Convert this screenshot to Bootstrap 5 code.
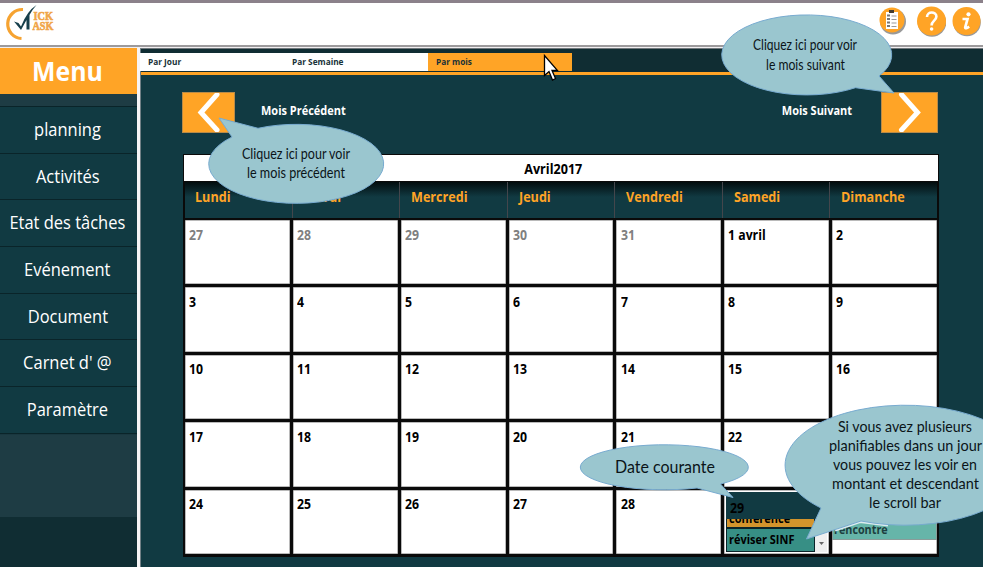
<!DOCTYPE html>
<html lang="fr">
<head>
<meta charset="utf-8">
<meta name="viewport" content="width=device-width, initial-scale=1">
<title>Click Task - Planning</title>
<link href="https://cdn.jsdelivr.net/npm/bootstrap@5.3.0/dist/css/bootstrap.min.css" rel="stylesheet">
<style>
  :root { --deep:#113a42; --night:#102d33; --slate:#1e3c44; --amber:#ffa426; }
  body { font-family:"Open Sans","Noto Sans",sans-serif; width:983px; height:567px; background:var(--deep); }
  .topbar { height:48px; border-top:3px solid #8b818a; border-bottom:1px solid #f1eff1; box-shadow:inset 0 -2px 0 #9c9a9c; padding-right:1px; }
  .brand-logo { margin:2px 0 0 5px; }
  .tools { padding-top:2px; gap:6px; }
  .layout { height:519px; }
  .side { width:137px; background:var(--night); }
  .menu-title { height:46px; background:var(--amber); color:#fff; font-weight:700; font-size:27px; line-height:46px; padding-right:2px; }
  .menu-title .fit { --k:.92; }
  .menu-body { background:var(--slate); padding-top:12px; height:423px; }
  .menu-item { height:46.7px; background:var(--deep); color:#fff; font-size:18px; border-top:1px solid #0a2429; box-shadow:0 1px 1px #0a2429; padding:0 2px 1px 0; }
  .fit { display:inline-block; white-space:nowrap; transform:scaleX(var(--k,.9)); }
  .menu-item .fit { --k:.915; }
  .fit-l { transform-origin:left center; }
  .fit-r { transform-origin:right center; }
  .rail { width:4px; background:#f6f4f5; border-right:1px solid #718086; }
  .tabs { height:27px; background:var(--night); border-top:1px solid #70777b; padding:4px 0 3px; border-bottom:3px solid var(--amber); }
  .tab-cell { width:144px; height:18px; background:#fff; color:#183238; font-size:9.2px; font-weight:700; line-height:18px; padding-left:8px; margin-left:-1px; margin-right:1px; }
  .tab-cell.on { background:var(--amber); }
  .month-nav { height:41px; margin:17px 45px 0 41px; color:#fff; font-weight:700; font-size:12.2px; }
  .month-nav .fit { position:relative; top:-1px; }
  .arrow-btn { background:var(--amber); height:41px; border:1px solid #b88a48; }
  .label-prev { margin-left:26px; }
  .label-next { margin-right:29px; }
  .cal { width:756px; margin:21px 0 0 42px; background:#0a0a0a; padding:1px 2px 3px 2px; font-weight:700; }
  .cal-title { height:26px; color:#000; font-size:14px; line-height:28px; background:#fff; margin:0 -1px; padding-right:16px; }
  .cal-head, .cal-grid { display:grid; grid-template-columns:repeat(7,1fr); }
  .cal-head { height:36px; margin-top:1px; gap:1px; background:#44464c; }
  .cal-head > div { background:linear-gradient(#020c0e 0,#113a42 15px); color:var(--amber); font-size:14px; padding:4px 0 0 11px; }
  .cal-head > div:first-child { padding-left:10px; }
  .cal-grid { margin-top:2px; gap:3px; height:334px; grid-template-rows:repeat(5,1fr); }
  .day { background:#fff; box-shadow:inset 0 0 0 .5px #777; color:#000; font-size:13.8px; line-height:20px; padding:4.500px 0 0 4.200px; min-width:0; min-height:0; overflow:hidden; }
  .day > .fit { --k:.89; }
  .day.off { color:#808080; }
  .day.now { padding:2px; }
  .now-head { background:var(--deep); height:27px; padding:6px 0 0 4px; width:101px; line-height:19px; }
  .now-list { width:89px; background:#0a2429; padding:0 1px 1px; font-size:12.2px; }
  .ev-cut { height:8px; background:#d3942c; overflow:hidden; line-height:8px; padding-left:2px; }
  .ev-cut .fit { position:relative; top:-4px; }
  .ev-main { height:22px; margin-top:2px; background:#378f85; line-height:22px; padding-left:2px; }
  .now-scroll { width:12px; background:#efefef; }
  .ev-soft { background:#66b5a9; color:#1d3f40; font-size:12px; line-height:17px; height:20px; border:1px solid #8a9c99; margin:26px 0 0 -4px; padding-left:1px; }
  .notes { left:0; top:0; pointer-events:none; }
  .notes text { font-family:Lato,"Open Sans",sans-serif; fill:#0b1418; }
  .bubble { fill:#9ac6cf; stroke:#78abd0; stroke-width:1; }
</style>
<script src="https://cdn.jsdelivr.net/npm/bootstrap@5.3.0/dist/js/bootstrap.bundle.min.js"></script>
</head>
<body class="position-relative overflow-hidden m-0">
<header class="topbar bg-white d-flex justify-content-between">
  <svg class="brand-logo" width="54" height="38" viewBox="4 5 54 38">
    <path d="M22 9.500A14.500 14.500 0 0 0 20.500 38.500" fill="none" stroke="#f6a331" stroke-width="3.200"/>
    <path d="M13 21.500l4.500 1.500 2.500 3.500Q26 11 35.500 5 31 10 28.500 15v14.500h-3V20l-5.500 10z" fill="#173f4b"/>
    <g font-family="Liberation Serif,serif" font-weight="700" font-size="12" fill="#f0a548" stroke="#f0a548" stroke-width=".6">
      <text x="32.500" y="20" textLength="19.500" lengthAdjust="spacingAndGlyphs">ICK</text>
      <text x="31.500" y="30" textLength="21" lengthAdjust="spacingAndGlyphs">ASK</text>
    </g>
  </svg>
  <div class="tools d-flex">
    <svg width="29" height="34" viewBox="879 5 29 34">
      <circle cx="893" cy="21.500" r="13" fill="#999"/><circle cx="892" cy="20" r="12.500" fill="#ffa426"/>
      <path d="M886 12h12v17h-12z" fill="#fff"/><path d="M889 10h5v3h-5z" fill="#443c30"/>
      <path d="M887 15.500h3m-3 3.500h3m-3 3.500h3m-3 3.500h3" stroke="#777" stroke-width="1.800"/><path d="M891.500 16h5m-5 3.500h5m-5 3.500h5m-5 3.500h5" stroke="#999"/>
    </svg>
    <svg width="32" height="34" viewBox="914 5 32 34">
      <circle cx="932" cy="22.500" r="14.300" fill="#999"/><circle cx="931.500" cy="21" r="14.500" fill="#ffa426"/>
      <path d="M927 17c0-6 9.400-5.700 9.400-.4 0 4-4.800 4.200-4.800 8.800" fill="none" stroke="#fff" stroke-width="2.600"/><circle cx="931.600" cy="29" r="1.800" fill="#fff"/>
    </svg>
    <svg width="30" height="34" viewBox="952 5 30 34">
      <circle cx="967" cy="22.500" r="13.800" fill="#999"/><circle cx="966.500" cy="21" r="14" fill="#ffa426"/>
      <circle cx="968.500" cy="14.300" r="2.100" fill="#fff"/><path d="M962.500 19h5l-2.300 8.500q0 1.800 4-.8" fill="none" stroke="#fff" stroke-width="2.700"/>
    </svg>
  </div>
</header>
<div class="layout d-flex">
  <nav class="side flex-shrink-0 text-center">
    <div class="menu-title"><span class="fit">Menu</span></div>
    <div class="menu-body">
      <div class="menu-item d-flex align-items-center justify-content-center"><span class="fit">planning</span></div>
      <div class="menu-item d-flex align-items-center justify-content-center"><span class="fit">Activités</span></div>
      <div class="menu-item d-flex align-items-center justify-content-center"><span class="fit">Etat des tâches</span></div>
      <div class="menu-item d-flex align-items-center justify-content-center"><span class="fit">Evénement</span></div>
      <div class="menu-item d-flex align-items-center justify-content-center"><span class="fit">Document</span></div>
      <div class="menu-item d-flex align-items-center justify-content-center"><span class="fit">Carnet d' @</span></div>
      <div class="menu-item d-flex align-items-center justify-content-center"><span class="fit">Paramètre</span></div>
    </div>
  </nav>
  <div class="rail flex-shrink-0"></div>
  <main class="flex-grow-1">
    <div class="tabs d-flex">
      <div class="tab-cell"><span class="fit fit-l">Par Jour</span></div>
      <div class="tab-cell"><span class="fit fit-l">Par Semaine</span></div>
      <div class="tab-cell on"><span class="fit fit-l">Par mois</span></div>
    </div>
    <div class="month-nav d-flex align-items-center">
      <div class="arrow-btn"><svg class="d-block" width="51" height="39" viewBox="183 93 51 39"><path d="M217 94.500L201 112.500 217 130" fill="none" stroke="#fff" stroke-width="5" stroke-linecap="round"/></svg></div>
      <span class="fit fit-l label-prev">Mois Précédent</span>
      <span class="fit fit-r label-next ms-auto">Mois Suivant</span>
      <div class="arrow-btn"><svg class="d-block" width="55" height="39" viewBox="882 93 55 39"><path d="M901.500 94.500L917.500 112.500 901.500 130" fill="none" stroke="#fff" stroke-width="5" stroke-linecap="round"/></svg></div>
    </div>
    <section class="cal">
      <div class="cal-title text-center"><span class="fit">Avril2017</span></div>
      <div class="cal-head">
        <div><span class="fit fit-l">Lundi</span></div><div><span class="fit fit-l">Mardi</span></div><div><span class="fit fit-l">Mercredi</span></div><div><span class="fit fit-l">Jeudi</span></div><div><span class="fit fit-l">Vendredi</span></div><div><span class="fit fit-l">Samedi</span></div><div><span class="fit fit-l">Dimanche</span></div>
      </div>
      <div class="cal-grid">
        <div class="day off"><span class="fit fit-l">27</span></div><div class="day off"><span class="fit fit-l">28</span></div><div class="day off"><span class="fit fit-l">29</span></div><div class="day off"><span class="fit fit-l">30</span></div><div class="day off"><span class="fit fit-l">31</span></div><div class="day"><span class="fit fit-l">1 avril</span></div><div class="day"><span class="fit fit-l">2</span></div>
        <div class="day"><span class="fit fit-l">3</span></div><div class="day"><span class="fit fit-l">4</span></div><div class="day"><span class="fit fit-l">5</span></div><div class="day"><span class="fit fit-l">6</span></div><div class="day"><span class="fit fit-l">7</span></div><div class="day"><span class="fit fit-l">8</span></div><div class="day"><span class="fit fit-l">9</span></div>
        <div class="day"><span class="fit fit-l">10</span></div><div class="day"><span class="fit fit-l">11</span></div><div class="day"><span class="fit fit-l">12</span></div><div class="day"><span class="fit fit-l">13</span></div><div class="day"><span class="fit fit-l">14</span></div><div class="day"><span class="fit fit-l">15</span></div><div class="day"><span class="fit fit-l">16</span></div>
        <div class="day"><span class="fit fit-l">17</span></div><div class="day"><span class="fit fit-l">18</span></div><div class="day"><span class="fit fit-l">19</span></div><div class="day"><span class="fit fit-l">20</span></div><div class="day"><span class="fit fit-l">21</span></div><div class="day"><span class="fit fit-l">22</span></div><div class="day"></div>
        <div class="day"><span class="fit fit-l">24</span></div><div class="day"><span class="fit fit-l">25</span></div><div class="day"><span class="fit fit-l">26</span></div><div class="day"><span class="fit fit-l">27</span></div><div class="day"><span class="fit fit-l">28</span></div>
        <div class="day now">
          <div class="now-head"><span class="fit fit-l">29</span></div>
          <div class="d-flex">
            <div class="now-list">
              <div class="ev-cut"><span class="fit fit-l">conférence</span></div>
              <div class="ev-main"><span class="fit fit-l">réviser SINF</span></div>
            </div>
            <div class="now-scroll d-flex align-items-end justify-content-center pb-1"><svg class="d-block" width="5" height="6"><path d="M0 0h5L2.500 3z" fill="#666"/></svg></div>
          </div>
        </div>
        <div class="day"><div class="ev-soft"><span class="fit fit-l">rencontre</span></div></div>
      </div>
    </section>
  </main>
</div>

<svg class="notes position-absolute" width="983" height="567" viewBox="0 0 983 567">
  <path d="M544.500 55.500v20l4.500-4 3.500 8.500 3-1.500-3.500-8h5.500z" fill="#fff" stroke="#000" stroke-width="1.300"/>

  <path class="bubble" d="M232 137L219 118 258 128.300A87.500 39.500 0 1 1 232 137z"/>
  <g font-size="15">
    <text x="242" y="159" textLength="108" lengthAdjust="spacingAndGlyphs">Cliquez ici pour voir</text>
    <text x="247" y="178" textLength="98" lengthAdjust="spacingAndGlyphs">le mois précédent</text>
  </g>

  <path class="bubble" d="M855.500 87.700L894 93 879 76A85 40 0 1 0 855.500 87.700z"/>
  <g font-size="15">
    <text x="753" y="50" textLength="104" lengthAdjust="spacingAndGlyphs">Cliquez ici pour voir</text>
    <text x="766" y="70" textLength="79" lengthAdjust="spacingAndGlyphs">le mois suivant</text>
  </g>

  <path class="bubble" d="M697 488L733 497.500 720.500 484A84 22.500 0 1 0 697 488z"/>
  <text x="615" y="473" font-size="17.500" textLength="100" lengthAdjust="spacingAndGlyphs">Date courante</text>

  <path d="M835 530l25-8.500 28 3.500" fill="none" stroke="#dcecf0" stroke-width="3"/>
  <path class="bubble" d="M861 521L806.500 539 821 508A120 60 0 1 1 861 521z"/>
  <g font-size="15">
    <text x="838" y="432" textLength="134" lengthAdjust="spacingAndGlyphs">Si vous avez plusieurs</text>
    <text x="829" y="451" textLength="153" lengthAdjust="spacingAndGlyphs">planifiables dans un jour</text>
    <text x="833" y="470" textLength="144" lengthAdjust="spacingAndGlyphs">vous pouvez les voir en</text>
    <text x="832" y="489" textLength="147" lengthAdjust="spacingAndGlyphs">montant et descendant</text>
    <text x="869" y="508" textLength="72" lengthAdjust="spacingAndGlyphs">le scroll bar</text>
  </g>
</svg>
</body>
</html>
